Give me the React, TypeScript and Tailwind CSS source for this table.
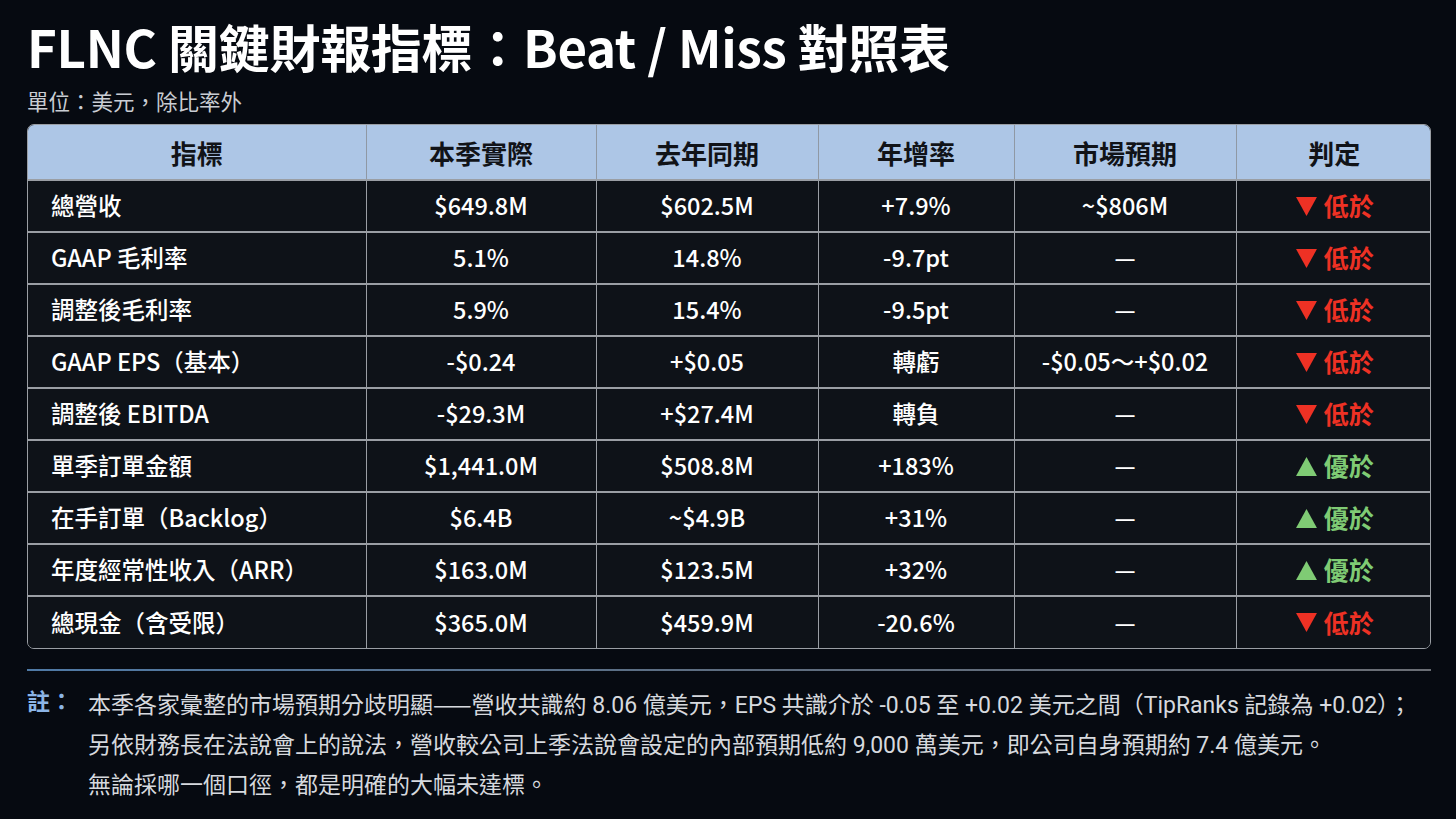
import React from "react";

type Row = {
  name: string;
  now: string;
  prev: string;
  yoy: string;
  est: string;
  beat: boolean;
};

const rows: Row[] = [
  { name: "總營收", now: "$649.8M", prev: "$602.5M", yoy: "+7.9%", est: "~$806M", beat: false },
  { name: "GAAP 毛利率", now: "5.1%", prev: "14.8%", yoy: "-9.7pt", est: "—", beat: false },
  { name: "調整後毛利率", now: "5.9%", prev: "15.4%", yoy: "-9.5pt", est: "—", beat: false },
  { name: "GAAP EPS（基本）", now: "-$0.24", prev: "+$0.05", yoy: "轉虧", est: "-$0.05～+$0.02", beat: false },
  { name: "調整後 EBITDA", now: "-$29.3M", prev: "+$27.4M", yoy: "轉負", est: "—", beat: false },
  { name: "單季訂單金額", now: "$1,441.0M", prev: "$508.8M", yoy: "+183%", est: "—", beat: true },
  { name: "在手訂單（Backlog）", now: "$6.4B", prev: "~$4.9B", yoy: "+31%", est: "—", beat: true },
  { name: "年度經常性收入（ARR）", now: "$163.0M", prev: "$123.5M", yoy: "+32%", est: "—", beat: true },
  { name: "總現金（含受限）", now: "$365.0M", prev: "$459.9M", yoy: "-20.6%", est: "—", beat: false },
];

const heads = ["指標", "本季實際", "去年同期", "年增率", "市場預期", "判定"];
const widths = ["w-[338px]", "w-[230px]", "w-[222px]", "w-[196px]", "w-[222px]", "w-[196px]"];

const Verdict = ({ beat }: { beat: boolean }) =>
  beat ? (
    <span className="inline-flex items-center gap-[6px] text-[#7fcb74] font-bold text-[25px]">
      <svg width="23" height="21" viewBox="0 0 22 20" className="mt-[1px]">
        <polygon points="11,1 21,19 1,19" fill="#7fcb74" />
      </svg>
      優於
    </span>
  ) : (
    <span className="inline-flex items-center gap-[6px] text-[#ee3124] font-bold text-[25px]">
      <svg width="23" height="21" viewBox="0 0 22 20" className="mt-[1px]">
        <polygon points="1,1 21,1 11,19" fill="#ee3124" />
      </svg>
      低於
    </span>
  );

export default function App() {
  return (
    <div
      className="w-[1456px] h-[819px] overflow-hidden bg-[#060a11] text-white px-[27px] pt-[16px]"
      style={{ fontFamily: '"Noto Sans CJK TC", "Noto Sans", sans-serif' }}
    >
      <h1 className="text-[51px] font-bold leading-[60px] tracking-[-0.3px]">
        FLNC 關鍵財報指標：Beat / Miss 對照表
      </h1>
      <p className="text-[21.5px] leading-[26px] text-[#c9cdd3] mt-[12px]">單位：美元，除比率外</p>

      {/* table */}
      <div className="mt-[10px] w-[1404px] rounded-[7px] border border-[#9a9ea4] overflow-hidden">
        <table className="w-full border-collapse table-fixed">
          <thead>
            <tr className="bg-[#adc6e6] h-[55px]">
              {heads.map((h, i) => (
                <th
                  key={h}
                  className={`${widths[i]} text-[26px] font-bold text-[#111318] border-l border-[#8f98a4] first:border-l-0`}
                >
                  {h}
                </th>
              ))}
            </tr>
          </thead>
          <tbody>
            {rows.map((r) => (
              <tr key={r.name} className="bg-[#0e1218] h-[52px] border-t-2 border-[#9a9ea4] text-[23.5px] font-medium">
                <td className="pl-[23px] text-left">{r.name}</td>
                <td className="text-center border-l border-[#9a9ea4]">{r.now}</td>
                <td className="text-center border-l border-[#9a9ea4]">{r.prev}</td>
                <td className="text-center border-l border-[#9a9ea4]">{r.yoy}</td>
                <td className="text-center border-l border-[#9a9ea4]">{r.est}</td>
                <td className="text-center border-l border-[#9a9ea4]">
                  <Verdict beat={r.beat} />
                </td>
              </tr>
            ))}
          </tbody>
        </table>
      </div>

      {/* note */}
      <div className="mt-[20px] h-[2px] w-[1404px] bg-gradient-to-r from-[#4f7aa6] via-[#5d6d80] to-[#6a6e75]" />
      <div
        className="mt-[12px] flex text-[23px] leading-[40px] text-[#d6d9de]"
        style={{ fontFamily: 'Roboto, "Noto Sans CJK TC", sans-serif' }}
      >
        <span className="w-[61px] shrink-0 text-[23px] font-bold text-[#8cb5e6]">註：</span>
        <div>
          <p className="whitespace-nowrap">
            本季各家彙整的市場預期分歧明顯
            <span style={{ fontFamily: '"Noto Sans CJK TC", sans-serif' }}>——</span>
            營收共識約 8.06 億美元，EPS 共識介於 -0.05 至 +0.02 美元之間（TipRanks 記錄為 +0.02）；
          </p>
          <p className="whitespace-nowrap">另依財務長在法說會上的說法，營收較公司上季法說會設定的內部預期低約 9,000 萬美元，即公司自身預期約 7.4 億美元。</p>
          <p>無論採哪一個口徑，都是明確的大幅未達標。</p>
        </div>
      </div>
    </div>
  );
}
